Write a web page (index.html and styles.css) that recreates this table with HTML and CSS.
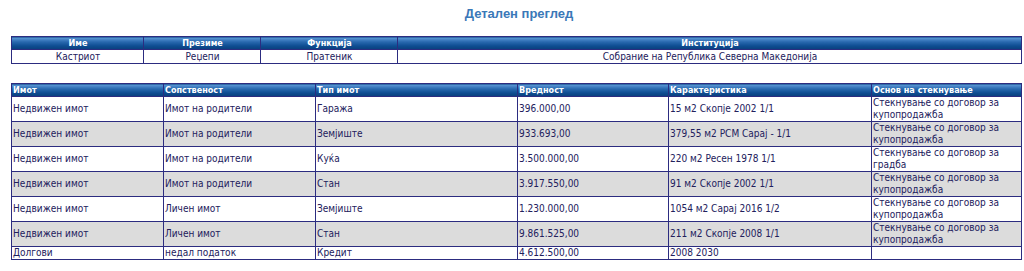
FILE: index.html
```html
<!DOCTYPE html>
<html>
<head>
<meta charset="utf-8">
<link rel="stylesheet" href="styles.css">
</head>
<body>
<div class="page">
  <h1 class="title">Детален преглед</h1>
  <table class="grid person">
    <colgroup>
      <col class="p1"><col class="p2"><col class="p3"><col class="p4">
    </colgroup>
    <thead>
      <tr><th>Име</th><th>Презиме</th><th>Функција</th><th>Институција</th></tr>
    </thead>
    <tbody>
      <tr><td>Кастриот</td><td>Реџепи</td><td>Пратеник</td><td>Собрание на Република Северна Македонија</td></tr>
    </tbody>
  </table>
  <table class="grid assets">
    <colgroup>
      <col class="a1"><col class="a2"><col class="a3"><col class="a4"><col class="a5"><col class="a6">
    </colgroup>
    <thead>
      <tr><th>Имот</th><th>Сопственост</th><th>Тип имот</th><th>Вредност</th><th>Карактеристика</th><th>Основ на стекнување</th></tr>
    </thead>
    <tbody>
      <tr><td>Недвижен имот</td><td>Имот на родители</td><td>Гаража</td><td>396.000,00</td><td>15 м2 Скопје 2002 1/1</td><td>Стекнување со договор за купопродажба</td></tr>
      <tr class="alt"><td>Недвижен имот</td><td>Имот на родители</td><td>Земјиште</td><td>933.693,00</td><td>379,55 м2 РСМ Сарај - 1/1</td><td>Стекнување со договор за купопродажба</td></tr>
      <tr><td>Недвижен имот</td><td>Имот на родители</td><td>Куќа</td><td>3.500.000,00</td><td>220 м2 Ресен 1978 1/1</td><td>Стекнување со договор за градба</td></tr>
      <tr class="alt"><td>Недвижен имот</td><td>Имот на родители</td><td>Стан</td><td>3.917.550,00</td><td>91 м2 Скопје 2002 1/1</td><td>Стекнување со договор за купопродажба</td></tr>
      <tr><td>Недвижен имот</td><td>Личен имот</td><td>Земјиште</td><td>1.230.000,00</td><td>1054 м2 Сарај 2016 1/2</td><td>Стекнување со договор за купопродажба</td></tr>
      <tr class="alt"><td>Недвижен имот</td><td>Личен имот</td><td>Стан</td><td>9.861.525,00</td><td>211 м2 Скопје 2008 1/1</td><td>Стекнување со договор за купопродажба</td></tr>
      <tr><td>Долгови</td><td>недал податок</td><td>Кредит</td><td>4.612.500,00</td><td>2008 2030</td><td></td></tr>
    </tbody>
  </table>
</div>
</body>
</html>
```
FILE: styles.css
```css
html, body {
  margin: 0;
  padding: 0;
  background: #ffffff;
}
body {
  font-family: "DejaVu Sans Condensed", "DejaVu Sans", sans-serif;
  font-size: 10px;
  color: #22205c;
}
.page {
  padding: 6px 2px 0 11px;
}
.title {
  margin: 0 0 15px 0;
  padding-left: 5px;
  text-align: center;
  font-family: "Liberation Sans", Arial, sans-serif;
  font-size: 13px;
  line-height: 15px;
  font-weight: bold;
  color: #3a78b8;
}
.grid {
  border-collapse: collapse;
  table-layout: fixed;
  width: 1011px;
  border: 1px solid #2c2c80;
}
.grid th,
.grid td {
  border: 1px solid #2c2c80;
  padding: 0 0 0 1px;
  line-height: 12px;
  overflow: hidden;
}
.grid th {
  height: 12px;
  color: #ffffff;
  font-weight: bold;
  font-size: 9px;
  text-align: left;
  background: linear-gradient(#5f9ad8 0%, #2a6ab0 35%, #0e4d92 70%, #0a3f7c 100%);
}
.person th,
.person td {
  text-align: center;
}
.person td {
  height: 13px;
}
.person {
  margin-bottom: 19px;
}
.assets td {
  height: 24px;
  vertical-align: middle;
}
.assets tr:last-child td {
  height: 12px;
}
.assets tr.alt td {
  background: #dcdcdc;
}
.p1 { width: 132px; }
.p2 { width: 117px; }
.p3 { width: 137px; }
.p4 { width: auto; }
.a1 { width: 152px; }
.a2 { width: 152px; }
.a3 { width: 202px; }
.a4 { width: 151px; }
.a5 { width: 203px; }
.a6 { width: auto; }
```
